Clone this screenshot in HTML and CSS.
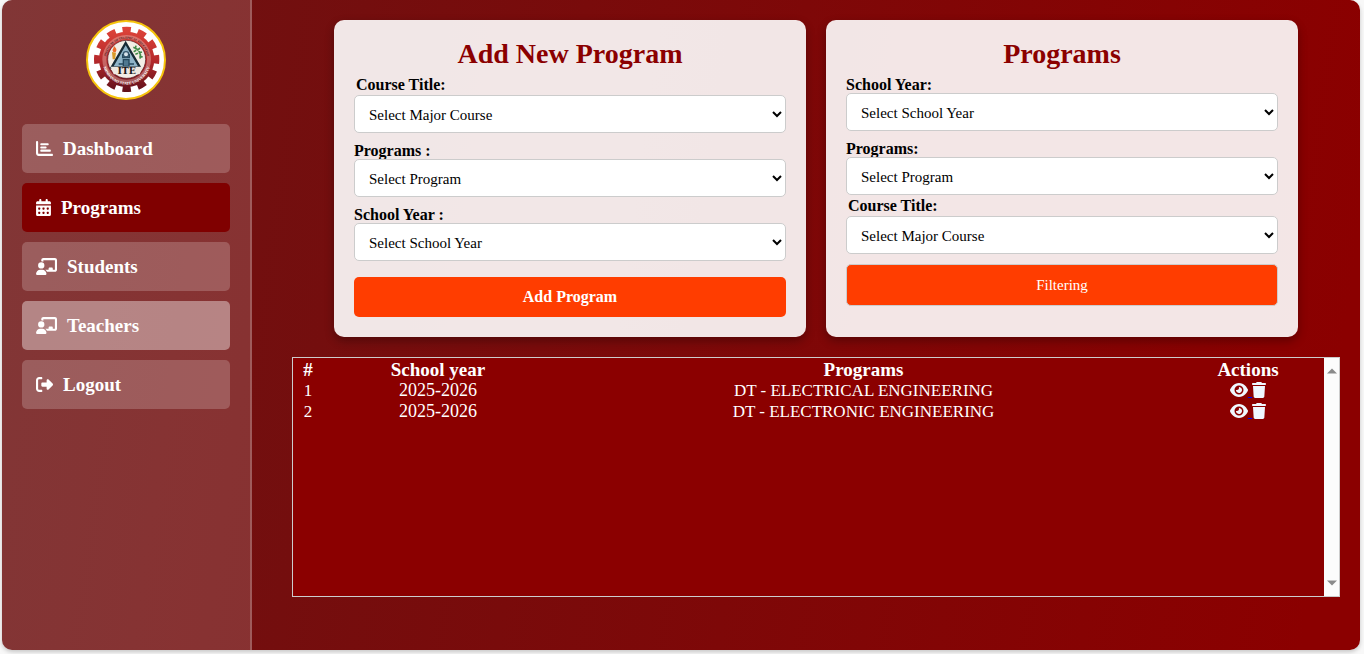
FILE: index.html
```html
<!DOCTYPE html>
<html lang="en">
<head>
<meta charset="utf-8">
<meta name="viewport" content="width=device-width, initial-scale=1">
<title>Programs</title>
<link rel="stylesheet" href="styles.css">
</head>
<body>
<svg class="sprite" aria-hidden="true">
  <symbol id="eye" viewBox="0 0 576 512"><path d="M288 32c-80.8 0-145.5 36.8-192.6 80.6C48.6 156 17.3 208 2.5 243.7c-3.3 7.9-3.3 16.7 0 24.6C17.3 304 48.6 356 95.4 399.4C142.5 443.2 207.2 480 288 480s145.5-36.8 192.6-80.6c46.8-43.5 78.1-95.4 93-131.1c3.3-7.9 3.3-16.7 0-24.6c-14.9-35.7-46.2-87.7-93-131.1C433.5 68.8 368.8 32 288 32zM144 256a144 144 0 1 1 288 0 144 144 0 1 1 -288 0zm144-64c0 35.3-28.7 64-64 64c-7.1 0-13.9-1.2-20.3-3.3c-5.5-1.8-11.9 1.6-11.7 7.4c.3 6.9 1.3 13.8 3.2 20.7c13.7 51.2 66.4 81.6 117.6 67.9s81.6-66.4 67.9-117.6c-11.1-41.5-47.8-69.4-88.6-71.1c-5.8-.2-9.2 6.1-7.4 11.7c2.1 6.4 3.3 13.2 3.3 20.3z"/></symbol>
  <symbol id="trash" viewBox="0 0 448 512"><path d="M135.2 17.7L128 32H32C14.3 32 0 46.3 0 64S14.3 96 32 96H416c17.7 0 32-14.3 32-32s-14.3-32-32-32H320l-7.2-14.3C307.4 6.8 296.3 0 284.2 0H163.8c-12.1 0-23.2 6.8-28.6 17.7zM416 128H32L53.2 467c1.6 25.3 22.6 45 47.9 45H346.9c25.3 0 46.3-19.7 47.9-45L416 128z"/></symbol>
  <symbol id="board" viewBox="0 0 640 512"><path d="M160 64c0-35.3 28.7-64 64-64H576c35.3 0 64 28.7 64 64V352c0 35.3-28.7 64-64 64H336.8c-11.8-25.5-29.9-47.5-52.4-64H384V320c0-17.7 14.3-32 32-32h64c17.7 0 32 14.3 32 32v32h64V64L224 64v49.1C205.2 102.2 183.3 96 160 96V64zm0 64a96 96 0 1 1 0 192 96 96 0 1 1 0-192zM133.3 352h53.3C260.3 352 320 411.7 320 485.3c0 14.7-11.9 26.7-26.7 26.7H26.7C11.9 512 0 500.1 0 485.3C0 411.7 59.7 352 133.3 352z"/></symbol>
</svg>
<div class="app">
  <aside class="sidebar">
    <svg class="logo" viewBox="0 0 240 240" role="img" aria-label="ITE logo">
      <defs>
        <linearGradient id="gear" gradientUnits="userSpaceOnUse" x1="0" y1="20" x2="0" y2="216"><stop offset="0" stop-color="#e0453a"/><stop offset=".5" stop-color="#b82a2c"/><stop offset="1" stop-color="#5e101a"/></linearGradient>
        <path id="arc-top" d="M60 118a62 62 0 1 1 124 0"/>
        <path id="arc-bottom" d="M50 122a72 72 0 0 0 144 0"/>
      </defs>
      <circle cx="120" cy="120" r="117" fill="#fff" stroke="#f6c40c" stroke-width="6"/>
      <circle cx="122" cy="118" r="87" fill="none" stroke="url(#gear)" stroke-width="22" pathLength="12" stroke-dasharray=".54 .46" stroke-dashoffset=".27"/>
      <circle cx="122" cy="118" r="83" fill="url(#gear)"/>
      <circle cx="122" cy="118" r="67" fill="none" stroke="#e8c4bc" stroke-width="12" opacity=".4"/>
      <circle cx="122" cy="118" r="57" fill="#f3eee6" stroke="#501018" stroke-width="2"/>
      <text class="logo-ring"><textPath href="#arc-top" startOffset="50%">INSTITUTE OF TECHNICAL EDUCATION</textPath></text>
      <text class="logo-ring logo-ring-light"><textPath href="#arc-bottom" startOffset="50%">MINDANAO STATE UNIVERSITY</textPath></text>
      <path d="M78 96l12 2-3 20h-7z" fill="#d89a28"/><path d="M83 97c-8-10 2-10 0-20 10 8 10 14 5 20z" fill="#ee6a28"/>
      <path d="M142 82c18 6 24 18 20 34M148 86l2-9M154 91l8-7M158 99l10-3M160 108l10 3M151 91l-8 4M156 100l-8 3" fill="none" stroke="#438b49" stroke-width="5"/>
      <path d="M119 69l43 73H77z" fill="#8fb4c8" stroke="#172b36" stroke-width="7"/>
      <path d="M110 104h20v9h-20zM112 119h17v20h-17zM98 132h13M130 132h14" fill="#4f7890" stroke="#26485d" stroke-width="4"/>
      <circle cx="120" cy="103" r="8" fill="#d7e4ec" stroke="#34566c" stroke-width="4"/>
      <path d="M74 140h96l-9 23H83z" fill="#eee8e1"/>
      <text class="logo-name" x="122" y="162">ITE</text>
    </svg>
    <nav class="menu">
      <a class="menu-item" href="#"><svg width="17" height="17" viewBox="0 0 512 512"><path d="M32 32c17.700 0 32 14.300 32 32V400c0 8.800 7.200 16 16 16H480c17.700 0 32 14.300 32 32s-14.300 32-32 32H80c-44.200 0-80-35.800-80-80V64C0 46.300 14.300 32 32 32zm96 96c0-17.700 14.300-32 32-32l192 0c17.700 0 32 14.300 32 32s-14.300 32-32 32l-192 0c-17.700 0-32-14.300-32-32zm32 64H288c17.700 0 32 14.300 32 32s-14.300 32-32 32H160c-17.700 0-32-14.300-32-32s14.300-32 32-32zm0 96H416c17.700 0 32 14.300 32 32s-14.300 32-32 32H160c-17.700 0-32-14.300-32-32s14.300-32 32-32z"/></svg>Dashboard</a>
      <a class="menu-item menu-item-active" href="#" aria-current="page"><svg width="15" height="17" viewBox="0 0 448 512"><path d="M128 0c17.700 0 32 14.300 32 32V64H288V32c0-17.700 14.300-32 32-32s32 14.300 32 32V64h48c26.500 0 48 21.500 48 48v48H0V112C0 85.500 21.500 64 48 64H96V32c0-17.700 14.300-32 32-32zM0 192H448V464c0 26.500-21.500 48-48 48H48c-26.500 0-48-21.500-48-48V192zm64 80v32c0 8.800 7.200 16 16 16h32c8.800 0 16-7.200 16-16V272c0-8.800-7.200-16-16-16H80c-8.800 0-16 7.200-16 16zm128 0v32c0 8.800 7.200 16 16 16h32c8.800 0 16-7.200 16-16V272c0-8.800-7.200-16-16-16H208c-8.800 0-16 7.200-16 16zm144-16c-8.800 0-16 7.200-16 16v32c0 8.800 7.200 16 16 16h32c8.800 0 16-7.200 16-16V272c0-8.800-7.200-16-16-16H336zM64 400v32c0 8.800 7.200 16 16 16h32c8.800 0 16-7.200 16-16V400c0-8.800-7.200-16-16-16H80c-8.800 0-16 7.200-16 16zm144-16c-8.800 0-16 7.200-16 16v32c0 8.800 7.200 16 16 16h32c8.800 0 16-7.200 16-16V400c0-8.800-7.200-16-16-16H208zm112 16v32c0 8.800 7.200 16 16 16h32c8.800 0 16-7.200 16-16V400c0-8.800-7.200-16-16-16H336c-8.800 0-16 7.200-16 16z"/></svg>Programs</a>
      <a class="menu-item" href="#"><svg width="21" height="17"><use href="#board"/></svg>Students</a>
      <a class="menu-item menu-item-hover" href="#"><svg width="21" height="17"><use href="#board"/></svg>Teachers</a>
      <a class="menu-item" href="#"><svg width="17" height="17" viewBox="0 0 512 512"><path d="M377.900 105.900L500.700 228.700c7.200 7.200 11.300 17.100 11.300 27.300s-4.100 20.100-11.300 27.300L377.900 406.100c-6.400 6.400-15 9.900-24 9.900c-18.700 0-33.900-15.200-33.900-33.900l0-62.100-128 0c-17.700 0-32-14.300-32-32l0-64c0-17.700 14.300-32 32-32l128 0 0-62.100c0-18.700 15.200-33.900 33.900-33.900c9 0 17.600 3.600 24 9.900zM160 96L96 96c-17.700 0-32 14.300-32 32l0 256c0 17.700 14.300 32 32 32l64 0c17.700 0 32 14.300 32 32s-14.300 32-32 32l-64 0c-53 0-96-43-96-96L0 128C0 75 43 32 96 32l64 0c17.700 0 32 14.300 32 32s-14.300 32-32 32z"/></svg>Logout</a>
    </nav>
  </aside>
  <main class="main">
    <div class="cards">
      <form class="card">
        <h2 class="card-title">Add New Program</h2>
        <div class="field field-course"><label for="add-course">Course Title:</label><select id="add-course"><option>Select Major Course</option></select></div>
        <div class="field"><label for="add-program">Programs :</label><select id="add-program"><option>Select Program</option></select></div>
        <div class="field"><label for="add-year">School Year :</label><select id="add-year"><option>Select School Year</option></select></div>
        <button class="button button-add" type="button">Add Program</button>
      </form>
      <form class="card">
        <h2 class="card-title">Programs</h2>
        <div class="field"><label for="filter-year">School Year:</label><select id="filter-year"><option>Select School Year</option></select></div>
        <div class="field field-tight"><label for="filter-program">Programs:</label><select id="filter-program"><option>Select Program</option></select></div>
        <div class="field field-course"><label for="filter-course">Course Title:</label><select id="filter-course"><option>Select Major Course</option></select></div>
        <button class="button button-filter" type="button">Filtering</button>
      </form>
    </div>
    <section class="records">
      <div class="records-body">
        <table class="table">
          <thead><tr><th class="col-number">#</th><th class="col-year">School year</th><th>Programs</th><th class="col-actions">Actions</th></tr></thead>
          <tbody>
            <tr><td>1</td><td class="year">2025-2026</td><td>DT - ELECTRICAL ENGINEERING</td><td class="actions"><a href="#" aria-label="View"><svg width="18" height="16"><use href="#eye"/></svg> </a><a href="#" aria-label="Delete"><svg width="14" height="16"><use href="#trash"/></svg></a></td></tr>
            <tr><td>2</td><td class="year">2025-2026</td><td>DT - ELECTRONIC ENGINEERING</td><td class="actions"><a href="#" aria-label="View"><svg width="18" height="16"><use href="#eye"/></svg> </a><a href="#" aria-label="Delete"><svg width="14" height="16"><use href="#trash"/></svg></a></td></tr>
          </tbody>
        </table>
      </div>
      <div class="scrollbar" aria-hidden="true">
        <svg width="10" height="6" viewBox="0 0 10 6"><path d="M0 5.500L5 .5l5 5z"/></svg>
        <svg width="10" height="6" viewBox="0 0 10 6"><path d="M0 .5h10l-5 5z"/></svg>
      </div>
    </section>
  </main>
</div>
</body>
</html>
```
FILE: styles.css
```css
* {
  box-sizing: border-box;
}

body {
  margin: 0;
  padding: 0 4px 4px 2px;
  min-height: 100vh;
  display: flex;
  background: #f8f8f8;
  font-family: Georgia, "Liberation Serif", serif;
}

.sprite {
  position: absolute;
  width: 0;
  height: 0;
}

.app {
  flex: 1;
  display: flex;
  border-radius: 10px;
  overflow: hidden;
  background: linear-gradient(98deg, #6c1313, #8b0000 96%);
  box-shadow: 0 2px 4px rgba(0, 0, 0, 0.2);
}

.sidebar {
  flex: 0 0 250px;
  display: flex;
  flex-direction: column;
  align-items: center;
  gap: 24px;
  padding: 20px;
  background: rgba(255, 255, 255, 0.15);
  border-right: 2px solid rgba(255, 255, 255, 0.2);
}

.logo {
  width: 80px;
  height: 80px;
}

.logo-ring {
  font: bold 9px "Liberation Serif", serif;
  text-anchor: middle;
  fill: #3c1014;
}

.logo-ring-light {
  font-size: 12px;
  fill: #fff;
}

.logo-name {
  font: bold 28px "DejaVu Serif", serif;
  text-anchor: middle;
  fill: #1c1818;
}

.menu {
  align-self: stretch;
  display: flex;
  flex-direction: column;
  gap: 10px;
}

.menu-item {
  display: flex;
  align-items: center;
  gap: 10px;
  height: 49px;
  padding: 0 14px;
  border-radius: 5px;
  background: rgba(255, 255, 255, 0.2);
  color: #fff;
  font-size: 19px;
  font-weight: bold;
  text-decoration: none;
}

.menu-item svg {
  fill: #fff;
}

.menu-item-active {
  background: #800000;
}

.menu-item-hover {
  background: rgba(255, 255, 255, 0.4);
}

.main {
  flex: 1;
  display: flex;
  flex-direction: column;
  gap: 20px;
  padding: 20px 20px 20px 40px;
}

.cards {
  display: flex;
  gap: 20px;
  padding: 0 42px;
}

.card {
  flex: 1;
  padding: 20px;
  border-radius: 10px;
  background: rgba(255, 255, 255, 0.9);
  box-shadow: 0 4px 10px rgba(0, 0, 0, 0.3);
}

.card-title {
  margin: 0 0 7px;
  color: #8b0000;
  font-size: 28px;
  line-height: 28px;
  text-align: center;
}

.field {
  display: flex;
  flex-direction: column;
  margin-bottom: 8px;
}

.field-tight {
  margin-bottom: 1px;
}

.field label {
  padding-top: 2px;
  font-size: 16px;
  font-weight: bold;
  line-height: 16px;
}

.field-course label {
  padding: 0 2px;
  line-height: 20px;
}

.field select {
  width: 100%;
  height: 38px;
  padding: 2px 10px 0;
  border: 1px solid #ccc;
  border-radius: 5px;
  background: #fff;
  color: #000;
  font: 15px Georgia, "Liberation Serif", serif;
}

.button {
  display: block;
  width: 100%;
  border: 0;
  border-radius: 5px;
  background: #ff3d00;
  color: #fff;
  font-family: inherit;
}

.button-add {
  height: 40px;
  margin-top: 16px;
  font-size: 16px;
  font-weight: bold;
}

.button-filter {
  height: 42px;
  margin-top: 10px;
  border: 1px solid #ccc;
  font-size: 15px;
}

.records {
  display: flex;
  height: 240px;
  border: 1px solid #ccc;
  background: #8b0000;
}

.records-body {
  flex: 1;
}

.table {
  width: 100%;
  table-layout: fixed;
  border-spacing: 2px;
  color: #fff;
  font-size: 17px;
  line-height: 19px;
  text-align: center;
}

.table th,
.table td {
  height: 19px;
  padding: 0;
}

.table th {
  font-size: 19px;
}

.col-number {
  width: 26px;
}

.col-year {
  width: 230px;
}

.col-actions {
  width: 148px;
}

.table .year {
  font-size: 18px;
}

.actions a {
  color: #0000ee;
}

.actions svg {
  vertical-align: -2px;
  fill: #f0f8ff;
}

.scrollbar {
  flex: 0 0 15px;
  display: flex;
  flex-direction: column;
  align-items: center;
  justify-content: space-between;
  padding: 10px 0;
  background: #fcfcfc;
}

.scrollbar svg {
  fill: #8b8b8b;
}
```
